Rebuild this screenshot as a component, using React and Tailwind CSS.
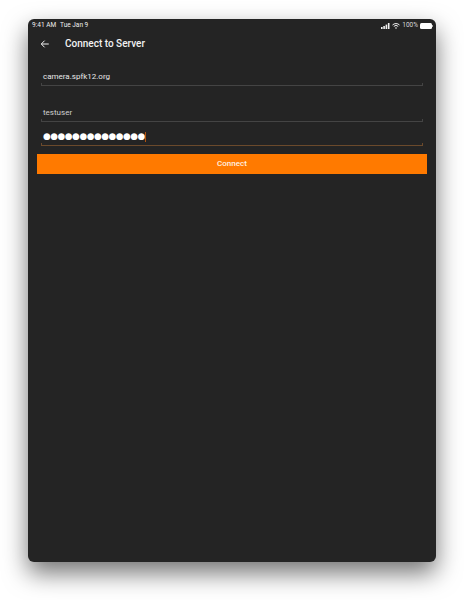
import React from "react";

function Field({ children, active, className }) {
  return (
    <div className={className}>
      <div className="flex h-[12px] items-center pl-[2px]">{children}</div>
      <div className={`h-[3px] border-x border-b ${active ? "border-[#6b4a2c]" : "border-[#444444]"}`} />
    </div>
  );
}

export default function App() {
  return (
    <div className="h-[600px] w-[464px] overflow-hidden bg-white pl-[28px] pt-[19px] font-['Roboto',sans-serif]">
      <div className="flex h-[543px] w-[408px] flex-col rounded-[6px] bg-[#242424] shadow-[0_11px_24px_rgba(0,0,0,0.55)]">
        <div className="flex h-[11px] items-center justify-between pl-[4px] pr-[3px] pt-[3px] text-[6.5px] text-[#f0f0f0]">
          <div className="flex gap-[4px]">
            <span>9:41 AM</span>
            <span>Tue Jan 9</span>
          </div>
          <div className="flex items-center gap-[2px]">
            <svg width="9" height="6" viewBox="0 0 9 6" fill="#f2f2f2">
              <rect x="0" y="4" width="1.6" height="2" />
              <rect x="2.3" y="3" width="1.6" height="3" />
              <rect x="4.6" y="1.6" width="1.6" height="4.4" />
              <rect x="6.9" y="0" width="1.6" height="6" />
            </svg>
            <svg width="8" height="6" viewBox="0 0 8 6" fill="none" stroke="#f2f2f2">
              <path d="M0.5 2 A5 5 0 0 1 7.5 2" strokeWidth="1" />
              <path d="M1.8 3.4 A3.2 3.2 0 0 1 6.2 3.4" strokeWidth="1" />
              <circle cx="4" cy="5" r="0.8" fill="#f2f2f2" stroke="none" />
            </svg>
            <span className="text-[#d8d8d8]">100%</span>
            <div className="h-[6px] w-[12px] rounded-[1.5px] bg-white" />
            <div className="-ml-[2px] h-[2px] w-[1px] bg-[#aaaaaa]" />
          </div>
        </div>

        <div className="flex h-[27px] items-center pl-[12px]">
          <svg width="10" height="10" viewBox="0 0 24 24" fill="none" stroke="#f2f2f2" strokeWidth="2.4">
            <path d="M21 12H4M11 4l-8 8 8 8" />
          </svg>
          <span className="ml-[15px] text-[10px] font-medium text-[#f2f2f2]">Connect to Server</span>
        </div>

        <div className="mt-[14px] flex flex-col px-[13px]">
          <Field>
            <span className="text-[8px] text-[#e8e8e8]">camera.spfk12.org</span>
          </Field>
          <Field className="mt-[21px]">
            <span className="text-[8px] text-[#cfcfcf]">testuser</span>
          </Field>
          <Field active className="mt-[9px]">
            <div className="mb-[3px] flex items-center">
              <span className="font-['DejaVu_Sans',sans-serif] text-[8.8px] leading-[12px] tracking-[-0.4px] text-white">●●●●●●●●●●●●●●</span>
              <span className="mt-[2px] h-[10px] w-[1px] bg-[#b2530f]" />
            </div>
          </Field>
        </div>

        <div className="mx-[9px] mt-[8px] flex h-[20px] items-center justify-center bg-[#ff7a00] text-[8px] font-medium text-[#fff1e2]">
          Connect
        </div>
      </div>
    </div>
  );
}
